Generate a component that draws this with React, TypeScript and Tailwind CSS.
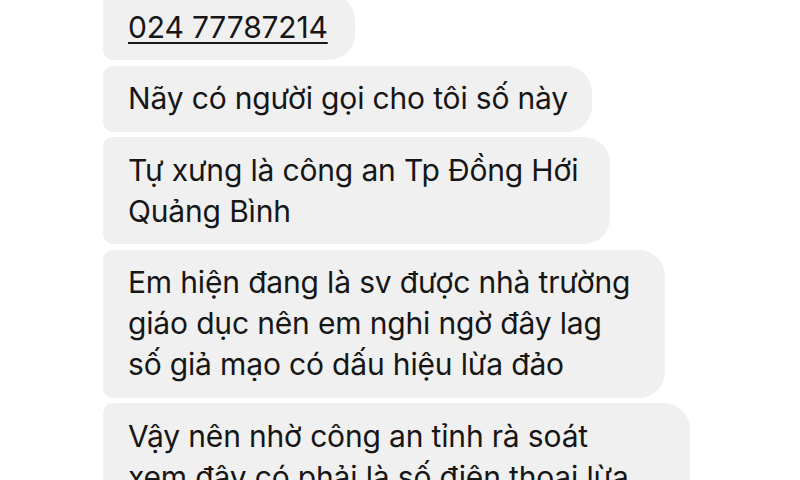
export default function App() {
  const bubble =
    "bg-[#f0f0f0] rounded-l-[10px] rounded-r-[26px] pl-[25px] py-[12.5px] leading-[41px] text-[30px] text-[#161616] whitespace-nowrap";

  return (
    <div className="w-[800px] h-[480px] overflow-hidden bg-white font-['Inter',sans-serif] tracking-[-0.01em]">
      <div className="flex flex-col items-start gap-[5.5px] pl-[103px] -mt-[6px]">
        <div className={`${bubble} w-[252px]`}>
          <span className="underline decoration-2 underline-offset-[4px]">024 77787214</span>
        </div>
        <div className={`${bubble} w-[489px]`}>Nãy có người gọi cho tôi số này</div>
        <div className={`${bubble} w-[507px]`}>
          Tự xưng là công an Tp Đồng Hới
          <br />
          Quảng Bình
        </div>
        <div className={`${bubble} w-[562px]`}>
          Em hiện đang là sv được nhà trường
          <br />
          giáo dục nên em nghi ngờ đây lag
          <br />
          số giả mạo có dấu hiệu lừa đảo
        </div>
        <div className={`${bubble} w-[587px]`}>
          Vậy nên nhờ công an tỉnh rà soát
          <br />
          xem đây có phải là số điện thoại lừa
          <br />
          đảo không ạ
        </div>
      </div>
    </div>
  );
}
